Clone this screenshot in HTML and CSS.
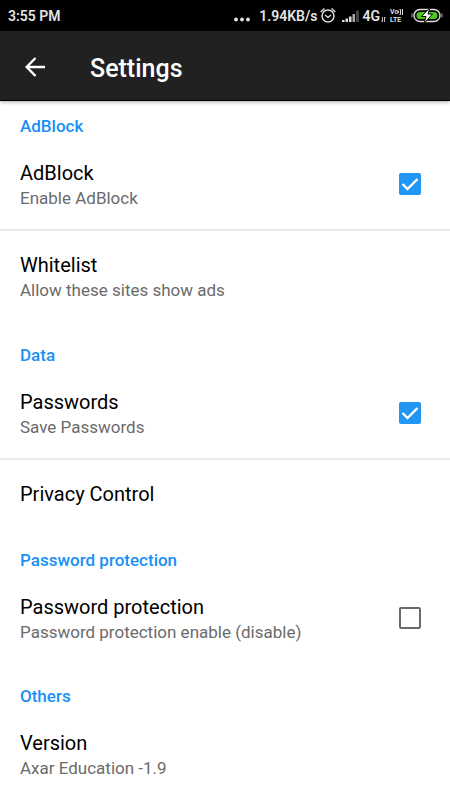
FILE: index.html
```html
<!DOCTYPE html>
<html lang="en">
<head>
<meta charset="utf-8">
<meta name="viewport" content="width=device-width, initial-scale=1">
<title>Settings</title>
<link rel="stylesheet" href="styles.css">
</head>
<body>
<div class="status">
  <span class="clock">3:55 PM</span>
  <div class="indicators">
    <svg class="dots" width="16" height="20" viewBox="0 0 16 20" fill="#e4e4e4"><circle cx="2" cy="13.500" r="1.900"/><circle cx="8" cy="13.500" r="1.900"/><circle cx="14" cy="13.500" r="1.900"/></svg>
    <span class="speed">1.94KB/s</span>
    <svg class="alarm" width="16" height="20" viewBox="0 0 16 20" fill="none" stroke="#dcdcdc" stroke-width="1.500"><circle cx="8" cy="10" r="6"/><path d="M.7 6L4.500 2.500M15.300 6L11.500 2.500M5 9L8 11.500L11 9"/></svg>
    <svg class="signal" width="17" height="20" viewBox="0 0 17 20"><path fill="#dcdcdc" d="M0 14h2.500v2H0zM3.500 12.500H6V16H3.500zM7 10.500h2.500V16H7z"/><path fill="#aaa" d="M10.500 8H13v8h-2.500z"/><path fill="#444" d="M14 4.500h3V16h-3z"/></svg>
    <span class="network">4G</span>
    <svg class="traffic" width="5" height="20" viewBox="0 0 5 20" stroke="#bbb" fill="none"><path d="M1.500 11v5M0 14.500l1.500 1.500M3.500 16v-5M3.500 11l1.500 1.500"/></svg>
    <span class="volte"><span class="vo">Vo<svg width="5" height="6" viewBox="0 0 5 6" fill="none" stroke="#ddd"><path d="M.5 2v2M1.500 .5h1v5h-1M4.500 0v6"/></svg></span><span>LTE</span></span>
    <svg class="battery" width="30" height="20" viewBox="0 0 30 20"><rect x="2" y="3.500" width="26" height="12" rx="6" fill="#050505" stroke="#ddd" stroke-width="1.400"/><rect x="4.500" y="6" width="21" height="7" rx="3.500" fill="#4fc51d"/><path d="M0 7.500v4M30 7.500v4" stroke="#aaa"/><path d="M18 1.500L9.500 10.500h4.500l-2 7 8.500-9.500H16z" fill="#fff" stroke="#050505"/></svg>
  </div>
</div>
<header class="appbar">
  <button class="back" aria-label="Back"><svg width="20" height="20" viewBox="0 0 20 20" fill="none" stroke="#fff" stroke-width="2.400"><path d="M20 10H2M10.500 1L1.700 10l8.800 9"/></svg></button>
  <h1>Settings</h1>
</header>
<main>
  <section>
    <h2>AdBlock</h2>
    <label class="row"><span class="text"><span class="title">AdBlock</span><span class="summary">Enable AdBlock</span></span><input type="checkbox" checked></label>
    <div class="row"><span class="text"><span class="title">Whitelist</span><span class="summary">Allow these sites show ads</span></span></div>
  </section>
  <section>
    <h2>Data</h2>
    <label class="row"><span class="text"><span class="title">Passwords</span><span class="summary">Save Passwords</span></span><input type="checkbox" checked></label>
    <div class="row single"><span class="title">Privacy Control</span></div>
  </section>
  <section>
    <h2>Password protection</h2>
    <label class="row"><span class="text"><span class="title">Password protection</span><span class="summary">Password protection enable (disable)</span></span><input type="checkbox"></label>
  </section>
  <section>
    <h2>Others</h2>
    <div class="row"><span class="text"><span class="title">Version</span><span class="summary">Axar Education -1.9</span></span></div>
  </section>
</main>
</body>
</html>
```
FILE: styles.css
```css
* { box-sizing: border-box; }
body {
  margin: 0;
  background: #fff;
  color: #000;
  font-family: Roboto, "Liberation Sans", sans-serif;
}
.status {
  display: flex;
  align-items: center;
  justify-content: space-between;
  padding: 0 8px;
  height: 31px;
  background: #000;
  color: #e4e4e4;
  font-size: 14px;
  font-weight: 600;
}
.indicators { display: flex; align-items: center; }
.dots { margin-right: 9px; }
.alarm { margin: 0 6px 0 3px; }
.network { margin-left: 3px; }
.traffic { margin: 0 4px 0 1px; }
.volte {
  display: flex;
  flex-direction: column;
  width: 15px;
  margin-right: 7px;
  font-size: 7px;
  line-height: 8px;
}
.vo { display: flex; align-items: center; }
.battery { overflow: visible; }
.appbar {
  position: relative;
  display: flex;
  align-items: center;
  gap: 40px;
  height: 70px;
  padding: 4px 20px 0;
  background: #212121;
  border-bottom: 1px solid #000;
  box-shadow: 0 1px 4px rgba(0, 0, 0, 0.35);
  color: #fff;
}
.back {
  display: flex;
  align-items: center;
  justify-content: center;
  width: 30px;
  height: 40px;
  margin: 0;
  padding: 0 0 2px;
  border: 0;
  background: none;
}
h1 { margin: 0; padding-top: 2px; font-size: 25px; font-weight: 500; line-height: 32px; }
h2 {
  margin: 0;
  padding: 21px 20px 0;
  color: #1890f5;
  font-size: 17px;
  font-weight: 500;
  line-height: 24px;
}
section:first-child h2 { padding-top: 13px; }
.row {
  display: flex;
  align-items: center;
  justify-content: space-between;
  min-height: 91px;
  padding: 0 29px 0 20px;
}
.row + .row { min-height: 93px; border-top: 2px solid #e9e9e9; }
.row + .single { min-height: 69px; }
.text { display: flex; flex-direction: column; padding-top: 2px; }
.row + .row .text { padding-top: 0; }
.title { font-size: 20px; line-height: 26px; }
.summary { color: #6b6b6b; font-size: 17px; line-height: 24px; }
input {
  appearance: none;
  flex: none;
  width: 22px;
  height: 22px;
  margin: 0;
  border: 2px solid #6a6a6a;
  border-radius: 2px;
  background: #fff;
}
input:checked {
  border-color: #2196f3;
  background: #2196f3 url("data:image/svg+xml,%3Csvg xmlns='http://www.w3.org/2000/svg' viewBox='0 0 18 18'%3E%3Cpath d='M1.500 9L6.500 14L16.500 4' fill='none' stroke='white' stroke-width='2.400'/%3E%3C/svg%3E") center / 18px 18px no-repeat;
}
```
